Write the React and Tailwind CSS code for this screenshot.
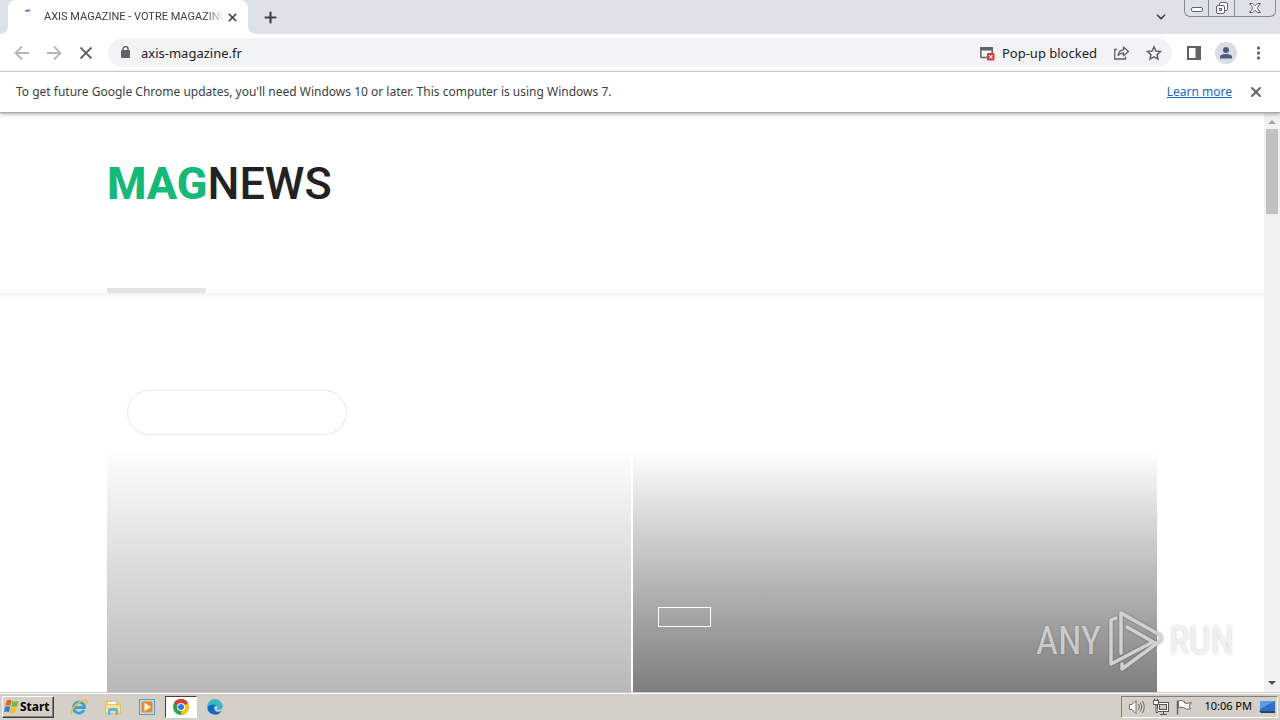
import { ChevronDown, Plus, X } from 'lucide-react'

const UI_FONT = "font-['Noto_Sans','Open_Sans',sans-serif]"

function TabStrip() {
  return (
    <div className="flex h-[34px] shrink-0 items-start justify-between bg-[#dee1e8]">
      <div className="flex h-full items-end">
        <div className="h-full w-2 bg-white">
          <div className="h-full rounded-br-lg bg-[#dee1e8]" />
        </div>
        <div className="flex h-full w-60 items-center rounded-t-lg bg-white pr-2 pl-3">
          <svg className="mr-2 h-4 w-4 shrink-0" viewBox="0 0 16 16" fill="none">
            <path d="M5.5 2.2 Q7.5 1 10 1.6" stroke="#3b6fd4" strokeWidth="1.8" />
          </svg>
          <span className="w-[180px] font-[Roboto,sans-serif] text-[11px] leading-4 whitespace-nowrap text-[#3c4043] mask-r-from-90%">
            AXIS MAGAZINE - VOTRE MAGAZINE
          </span>
          <button aria-label="Close tab" className="ml-auto flex h-4 w-4 items-center justify-center text-[#3c4043]">
            <X size={13} strokeWidth={3} />
          </button>
        </div>
        <div className="h-full w-2 bg-white">
          <div className="h-full rounded-bl-lg bg-[#dee1e8]" />
        </div>
        <button aria-label="New tab" className="ml-1 flex h-full w-5 items-center justify-center text-[#3c4043]">
          <Plus size={17} strokeWidth={3} />
        </button>
      </div>

      <div className="flex items-start pr-1">
        <button aria-label="Search tabs" className="mr-4 flex h-[34px] items-center text-[#3c4043]">
          <ChevronDown size={14} strokeWidth={3} />
        </button>
        <div className="flex h-[17px] overflow-hidden rounded-b-md border border-t-0 border-[#83889a]">
          <button aria-label="Minimize" className="flex w-6 items-center justify-center border-r border-[#83889a]">
            <svg width="14" height="14" viewBox="0 0 14 14">
              <rect x="1.5" y="6.5" width="11" height="4" rx="1.5" fill="#fff" stroke="#5d6172" />
            </svg>
          </button>
          <button aria-label="Restore" className="flex w-[26px] items-center justify-center border-r border-[#83889a]">
            <svg width="14" height="14" viewBox="0 0 14 14" fill="#fff" stroke="#5d6172">
              <rect x="4.5" y="1.5" width="8" height="8" rx="1.5" />
              <rect x="1.5" y="4.5" width="8" height="8" rx="1.5" />
              <rect x="4.5" y="7.5" width="2" height="2" />
            </svg>
          </button>
          <button aria-label="Close window" className="flex w-10 items-center justify-center">
            <svg width="14" height="14" viewBox="0 0 14 14">
              <path
                d="M1.5 2.5 H4.8 L7 4.8 L9.2 2.5 H12.5 L9 7 L12.5 11.5 H9.2 L7 9.2 L4.8 11.5 H1.5 L5 7 Z"
                fill="#fff"
                stroke="#5d6172"
              />
            </svg>
          </button>
        </div>
      </div>
    </div>
  )
}

function Toolbar() {
  return (
    <div className="flex h-[38px] shrink-0 items-center border-b border-[#d9dbdf] bg-white pr-[14px] pl-3">
      <div className="flex items-center gap-3">
        <button aria-label="Back" className="flex h-5 w-5 items-center justify-center">
          <svg width="16" height="16" viewBox="0 0 16 16" fill="none" stroke="#b4b6ba" strokeWidth="1.8">
            <path d="M15 8 H2 M8 1.5 L1.5 8 L8 14.5" />
          </svg>
        </button>
        <button aria-label="Forward" className="flex h-5 w-5 items-center justify-center">
          <svg width="16" height="16" viewBox="0 0 16 16" fill="none" stroke="#b4b6ba" strokeWidth="1.8">
            <path d="M1 8 H14 M8 1.5 L14.5 8 L8 14.5" />
          </svg>
        </button>
        <button aria-label="Stop loading" className="flex h-5 w-5 items-center justify-center">
          <svg width="16" height="16" viewBox="0 0 16 16" stroke="#5f6368" strokeWidth="1.8">
            <path d="M2.5 2.5 L13.5 13.5 M13.5 2.5 L2.5 13.5" />
          </svg>
        </button>
      </div>

      <div className="ml-3 flex h-[29px] flex-1 items-center rounded-full bg-[#f1f3f4] pr-[9px] pl-3">
        <svg className="shrink-0" width="12" height="14" viewBox="0 0 12 14">
          <rect x="1" y="4" width="9" height="8" rx="1" fill="#5f6368" />
          <path d="M3 4.5 V3 a2.5 2.5 0 0 1 5 0 V4.5" fill="none" stroke="#5f6368" strokeWidth="1.4" />
        </svg>
        <input
          type="text"
          aria-label="Address"
          defaultValue="axis-magazine.fr"
          className="ml-[9px] min-w-0 flex-1 bg-transparent text-[13px] leading-5 text-[#202124] outline-none"
        />
        <button className="flex items-center gap-[7px] text-[13px] leading-5 text-[#202124]">
          <svg width="16" height="16" viewBox="0 0 16 16">
            <path d="M1.8 12.5 V2.8 H13.2 V8 M1.8 12.5 H8" fill="none" stroke="#5f6368" strokeWidth="1.5" />
            <rect x="1" y="2" width="13" height="3.5" fill="#5f6368" />
            <rect x="8" y="8" width="7.5" height="7.5" rx="1" fill="#d73a3a" />
            <path d="M10.2 10.2 l3.2 3.2 M13.4 10.2 l-3.2 3.2" stroke="#fff" strokeWidth="1.2" />
          </svg>
          Pop-up blocked
        </button>
        <button aria-label="Share this page" className="ml-4">
          <svg width="17" height="16" viewBox="0 0 17 16" fill="none" stroke="#5f6368" strokeWidth="1.3">
            <path d="M4 4.5 H1.7 V14 H12.5 V11.5" />
            <path d="M5 10.5 C5.3 7 7.3 5 10.5 4.8 V2 L15.5 6.5 L10.5 10.8 V8 C8 8 6.5 8.7 5 10.5 Z" strokeLinejoin="round" />
          </svg>
        </button>
        <button aria-label="Bookmark this page" className="ml-[15px]">
          <svg width="18" height="16" viewBox="0 0 18 16" fill="none" stroke="#5f6368" strokeWidth="1.5">
            <path d="M9 1.8 L10.9 6 L15.5 6.5 L12.1 9.6 L13 14.1 L9 11.8 L5 14.1 L5.9 9.6 L2.5 6.5 L7.1 6 Z" />
          </svg>
        </button>
      </div>

      <div className="flex items-center">
        <button aria-label="Side panel" className="ml-[14px]">
          <svg width="16" height="16" viewBox="0 0 16 16">
            <rect x="2" y="2" width="12" height="12" fill="#fff" stroke="#5f6368" strokeWidth="2" />
            <rect x="9.5" y="2" width="5" height="12" fill="#5f6368" />
          </svg>
        </button>
        <button aria-label="Profile" className="ml-[13px]">
          <svg width="22" height="22" viewBox="0 0 22 22">
            <circle cx="11" cy="11" r="11" fill="#dadde6" />
            <circle cx="11" cy="8" r="3" fill="#505b7d" />
            <path d="M5 16.5 V15 C5 12.8 8.5 12 11 12 C13.5 12 17 12.8 17 15 V16.5 Z" fill="#505b7d" />
          </svg>
        </button>
        <button aria-label="Menu" className="ml-[13px]">
          <svg width="16" height="16" viewBox="0 0 16 16" fill="#5f6368">
            <rect x="7" y="1.5" width="3" height="3" rx="1" />
            <rect x="7" y="6.5" width="3" height="3" rx="1" />
            <rect x="7" y="11.5" width="3" height="3" rx="1" />
          </svg>
        </button>
      </div>
    </div>
  )
}

function InfoBar() {
  return (
    <div className="relative z-10 flex h-[41px] shrink-0 items-center border-b border-[#a9a9a9] bg-white px-4 text-xs text-[#3c4043] shadow-[0_1px_4px_rgba(0,0,0,0.35)]">
      <span>To get future Google Chrome updates, you'll need Windows 10 or later. This computer is using Windows 7.</span>
      <a href="#learn" className="ml-auto text-[#1a66c2] underline">
        Learn more
      </a>
      <button aria-label="Dismiss" className="ml-4 text-[#5f6368]">
        <X size={16} strokeWidth={3} />
      </button>
    </div>
  )
}

function Page() {
  return (
    <div className="min-w-0 flex-1 overflow-hidden bg-white">
      <header className="h-[180px] shadow-[0_2px_5px_rgba(0,0,0,0.07)]">
        <div className="mx-auto flex h-full max-w-[1050px] flex-col justify-between pt-[45px]">
          <h1 className="font-[Roboto,sans-serif] text-[45px] leading-[52px] font-medium text-[#222]">
            <span className="font-extrabold text-[#17b978]">MAG</span>NEWS
          </h1>
          <div className="h-[5px] w-[99px] bg-[#e5e5e5]" />
        </div>
      </header>
      <main className="mx-auto max-w-[1050px] pt-[97px]">
        <input
          type="text"
          aria-label="Search"
          className="ml-5 block h-[45px] w-[220px] rounded-full border border-[#e6e6e6] px-5 outline-none"
        />
        <div className="mt-3 grid grid-cols-2 gap-[2px]">
          <div className="h-[530px] bg-linear-to-b from-white to-[#6c6c6c]" />
          <div className="h-[270px] bg-linear-to-b from-white from-1% to-[#727272] px-[25px] pt-40">
            <div className="h-5 w-[53px] border border-white" />
          </div>
        </div>
      </main>
    </div>
  )
}

function ScrollBar() {
  return (
    <div className="flex w-4 shrink-0 flex-col items-center bg-[#f1f1f1]">
      <svg width="16" height="16" viewBox="0 0 16 16">
        <path d="M4 11 L8 7 L12 11 Z" fill="#a3a3a3" />
      </svg>
      <div className="h-[85px] w-3 bg-[#c1c1c1]" />
      <svg className="mt-auto" width="16" height="16" viewBox="0 0 16 16">
        <path d="M4 5 L8 9 L12 5 Z" fill="#505050" />
      </svg>
    </div>
  )
}

function Watermark() {
  return (
    <div className="absolute right-[46px] bottom-5 flex items-center font-['Liberation_Sans_Narrow','Roboto_Condensed','DejaVu_Sans_Condensed',sans-serif] text-[38px] leading-[60px] text-white/60 [text-shadow:0_0_3px_rgba(0,0,0,0.2)]">
      <span>ANY</span>
      <svg
        className="mx-[6px] drop-shadow-[0_0_1px_rgba(0,0,0,0.3)]"
        width="56"
        height="62"
        viewBox="0 0 56 62"
        fill="none"
        stroke="#d2d2d2"
        strokeWidth="3.5"
        strokeLinejoin="round"
        strokeLinecap="round"
      >
        <path d="M14 43 V3 L53 25 Q56 28 53 31 L15 59 V54" />
        <path d="M9 8 L4 10 V54 L44 33" />
        <path d="M20 17 L48 33" />
      </svg>
      <span>RUN</span>
    </div>
  )
}

function StartButton() {
  return (
    <button className="flex h-[22px] w-[52px] items-center gap-px border border-t-white border-r-[#404040] border-b-[#404040] border-l-white bg-[#d4d0c8] pl-px text-xs font-bold text-black shadow-[inset_-1px_-1px_0_#808080]">
      <svg width="15" height="15" viewBox="0 0 16 16">
        <path d="M3 1.5 Q5.5 0 8 1.5 L6.8 7.3 Q4.5 6 1.5 7.3 Z" fill="#e8602c" />
        <path d="M9 2 Q11.5 3.5 15.5 2 L14 7.8 Q10.5 9 7.8 7.8 Z" fill="#7db93a" />
        <path d="M1.3 8.3 Q4 7 6.5 8.3 L5.3 14 Q3 12.8 0 14 Z" fill="#3579c8" />
        <path d="M7.5 8.8 Q10 10 13.6 8.8 L12.2 14.5 Q9 15.7 6 14.5 Z" fill="#f5bd2b" />
      </svg>
      <span>Start</span>
    </button>
  )
}

function TaskBar() {
  return (
    <footer className="flex h-7 shrink-0 items-center border-t border-[#d4d0c8] bg-[#d4d0c8] pr-[2px] pl-[2px] shadow-[inset_0_1px_0_#fff]">
      <StartButton />
      <div className="ml-[9px] flex items-center gap-[2px]">
        <button aria-label="Internet Explorer" className="flex h-[22px] w-8 items-center justify-center">
          <svg width="18" height="18" viewBox="0 0 18 18" fill="none">
            <path d="M14 12 A5.5 5.5 0 1 1 14.5 9.5 H5" stroke="#3aa0dc" strokeWidth="2.8" />
            <path d="M2 16 C-1 12 11 1 16 2 C18 2.5 17 5 16 6" stroke="#f0bd37" strokeWidth="1.5" />
          </svg>
        </button>
        <button aria-label="Windows Explorer" className="flex h-[22px] w-8 items-center justify-center">
          <svg width="18" height="18" viewBox="0 0 18 18">
            <path d="M2 2 h5 l1 2 h7 v10 H2 Z" fill="#e8c65a" />
            <rect x="4" y="4" width="8" height="3" fill="#fff" />
            <path d="M1.5 6.5 H16.5 V15.5 H1.5 Z" fill="#f7e28f" stroke="#d5b24b" strokeWidth=".7" />
            <path d="M4 17 V12 Q4 10 6 10 H12 Q14 10 14 12 V17 H11.5 V13 H6.5 V17 Z" fill="#65b5dc" />
          </svg>
        </button>
        <button aria-label="Media Player" className="flex h-[22px] w-8 items-center justify-center">
          <svg width="18" height="18" viewBox="0 0 18 18">
            <rect x="1.5" y="1.5" width="15" height="15" fill="#b9d8ee" stroke="#5a9bc8" />
            <rect x="3.5" y="3.5" width="11" height="11" rx="2" fill="#f08a1d" />
            <path d="M6.5 4.8 L12.8 9 L6.5 13.2 Z" fill="#fff" />
          </svg>
        </button>
        <button
          aria-label="Google Chrome"
          className="flex h-[22px] w-8 items-center justify-center border border-t-[#404040] border-r-white border-b-white border-l-[#404040] bg-white"
        >
          <svg width="16" height="16" viewBox="0 0 16 16">
            <circle cx="8" cy="8" r="8" fill="#2f9e4f" />
            <path d="M8 8 L1.07 4 A8 8 0 0 1 14.93 4 Z" fill="#e33b2e" />
            <path d="M8 8 L14.93 4 A8 8 0 0 1 8 16 Z" fill="#fbc116" />
            <circle cx="8" cy="8" r="4" fill="#fff" />
            <circle cx="8" cy="8" r="3" fill="#3b78e7" />
          </svg>
        </button>
        <button aria-label="Microsoft Edge" className="flex h-[22px] w-8 items-center justify-center">
          <svg width="16" height="16" viewBox="0 0 16 16">
            <path d="M.3 8 A7.7 7.7 0 0 1 15.7 7.5 C15.7 10 13.5 11 11 10.8 C9 10.6 10.5 9.5 10.3 8.2 C10 5.5 4 4.5 .3 8 Z" fill="#38b8c4" />
            <path d="M.3 8 C2 5 8 4.5 9.7 7 C7.5 6.5 6.5 9 8 11.2 C9.5 13 12 13.2 14.5 12 A7.7 7.7 0 0 1 .3 8 Z" fill="#1268c3" />
          </svg>
        </button>
      </div>

      <div className="ml-auto flex h-[22px] items-center border border-t-[#808080] border-r-white border-b-white border-l-[#808080] pr-px pl-[6px]">
        <svg width="18" height="18" viewBox="0 0 18 18" fill="#fff" stroke="#6f6f6f">
          <path d="M1.5 6.5 H4 L8 2.5 V15.5 L4 11.5 H1.5 Z" />
          <path d="M10.5 6 Q12.3 9 10.5 12 M12.5 4.5 Q15 9 12.5 13.5 M14.5 3 Q18 9 14.5 15" fill="none" />
        </svg>
        <svg className="ml-[6px]" width="18" height="18" viewBox="0 0 18 18" fill="#fff" stroke="#555">
          <rect x="5.5" y="4.5" width="11" height="9" />
          <rect x="7.5" y="6.5" width="7" height="5" fill="#c9c9c9" />
          <path d="M8 16.5 H15 M11.5 14 V16" />
          <path d="M1.5 2.5 H6.5 V6.5 H1.5 Z M2.5 .5 V2 M5.5 .5 V2 M4 7 V14.5 H6" />
        </svg>
        <svg className="ml-[5px]" width="18" height="18" viewBox="0 0 18 18" fill="#fff" stroke="#666">
          <path d="M2.5 2.5 V16.5" strokeWidth="1.5" />
          <path d="M3.5 3 Q6 1.5 9.5 3.5 V5 Q12 6 16.5 4.5 L14 8 L15.5 11 Q11 12 8.5 9.5 Q6 8.5 3.5 10 Z" />
        </svg>
        <time className="ml-[11px] text-[11px] text-black">10:06 PM</time>
        <svg className="ml-[6px]" width="18" height="18" viewBox="0 0 18 18">
          <path d="M2 3 H17 V13 H2 Z" fill="#2d6fc9" />
          <path d="M2 3 H17 L2 11 Z" fill="#5d9be2" />
          <path d="M1 13 H17 V15 H3 Z" fill="#24446e" />
        </svg>
      </div>
    </footer>
  )
}

export default function App() {
  return (
    <div className={`relative flex h-screen flex-col overflow-hidden ${UI_FONT}`}>
      <TabStrip />
      <Toolbar />
      <InfoBar />
      <div className="relative flex min-h-0 flex-1">
        <Page />
        <ScrollBar />
        <Watermark />
      </div>
      <TaskBar />
    </div>
  )
}
